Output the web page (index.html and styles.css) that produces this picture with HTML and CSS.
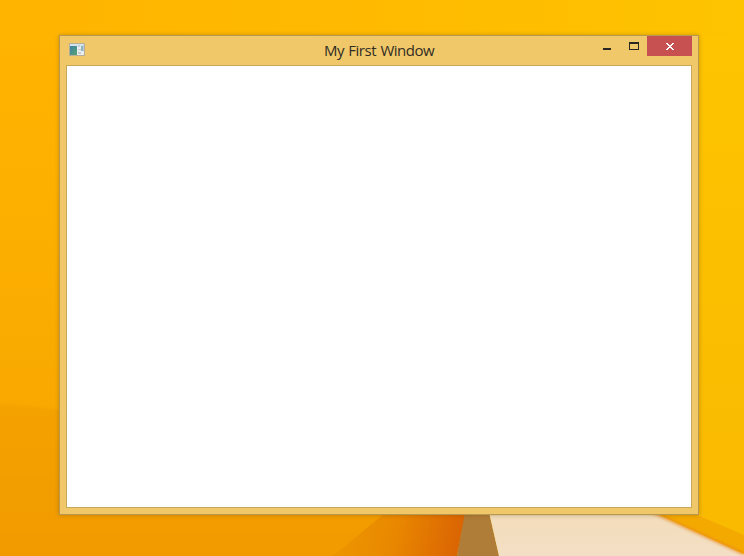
FILE: index.html
```html
<!DOCTYPE html>
<html lang="en">
<head>
<meta charset="utf-8">
<title>My First Window</title>
<link rel="stylesheet" href="styles.css">
</head>
<body>
<svg class="wallpaper" viewBox="0 0 744 556" aria-hidden="true">
  <defs>
    <linearGradient id="base" x1="0" y1="0" x2="1" y2="0"><stop offset="0" stop-color="#ffb400"/><stop offset=".5" stop-color="#ffba00"/><stop offset="1" stop-color="#fec400"/></linearGradient>
    <linearGradient id="left" x1="0" y1="0" x2="0" y2="1"><stop offset="0" stop-color="#ffb400"/><stop offset=".5" stop-color="#fdaf00"/><stop offset="1" stop-color="#f8a800"/></linearGradient>
    <linearGradient id="low" x1="0" y1="0" x2="0" y2="1"><stop offset="0" stop-color="#f4a200"/><stop offset="1" stop-color="#f19900"/></linearGradient>
    <linearGradient id="ember" gradientUnits="userSpaceOnUse" x1="350" y1="520" x2="462" y2="545"><stop offset="0" stop-color="#ec9300"/><stop offset=".4" stop-color="#e98800"/><stop offset=".8" stop-color="#df6f02"/><stop offset="1" stop-color="#d96303"/></linearGradient>
    <linearGradient id="right" x1="0" y1="0" x2="0" y2="1"><stop offset="0" stop-color="#fec400"/><stop offset="1" stop-color="#f9b900"/></linearGradient>
    <linearGradient id="cream" x1="0" y1="0" x2="0" y2="1"><stop offset="0" stop-color="#f2dcb9"/><stop offset="1" stop-color="#f3dfc5"/></linearGradient>
    <filter id="soft" x="-10%" y="-30%" width="120%" height="160%"><feGaussianBlur stdDeviation="1.5"/></filter>
  </defs>
  <rect width="744" height="556" fill="url(#base)"/>
  <path d="M0 36H100V420H0Z" fill="url(#left)"/>
  <path d="M-20 402L100 413L400 500V576H-20Z" fill="url(#low)" filter="url(#soft)"/>
  <path d="M386 512L333 556H457L466 512Z" fill="url(#ember)"/>
  <rect x="650" y="36" width="94" height="520" fill="url(#right)"/>
  <path d="M465 512L457 556H499L489 512Z" fill="#af7d38"/>
  <path d="M489 512H653L744 554V556H499Z" fill="url(#cream)"/>
  <path d="M653 512L690 512L744 535V554Z" fill="#f4a900"/>
  <path d="M650 511L744 554" fill="none" stroke="#e98a16" stroke-width="2" filter="url(#soft)"/>
</svg>
<main class="window">
  <header class="titlebar">
    <svg class="app-icon" viewBox="0 0 16 13" aria-hidden="true">
      <defs><linearGradient id="pane" x1="0" y1="0" x2="1" y2="1"><stop offset="0" stop-color="#3f83a8"/><stop offset="1" stop-color="#55a36d"/></linearGradient></defs>
      <path d="M0 0H16V13H0Z" fill="#b5ae98"/>
      <path d="M1 1H15V12H1Z" fill="#e9edf0"/>
      <path d="M1 1H15V3H1Z" fill="#d5e3ec"/>
      <path d="M1 3H8V12H1Z" fill="url(#pane)"/>
      <path d="M9 2H11V4H9ZM9 6H12V7H9ZM9 9H12V11H9Z" fill="#c6cbcf"/>
      <path d="M12 3H14V8H12Z" fill="#8db8b9"/>
      <path d="M14 2H15V8H14Z" fill="#bdc5dc"/>
    </svg>
    <h1 class="title">My First Window</h1>
    <div class="controls">
      <button class="control" aria-label="Minimize"><svg viewBox="0 0 27 20"><path d="M10 12H18V14H10Z"/></svg></button>
      <button class="control" aria-label="Maximize"><svg viewBox="0 0 27 20"><path fill-rule="evenodd" d="M9 6H19V14H9ZM10 8V13H18V8Z"/></svg></button>
      <button class="control close" aria-label="Close"><svg viewBox="0 0 45 20"><path d="M19 7h2v1h1v1h2v-1h1v-1h2v1h-1v1h-1v1h-1v1h1v1h1v1h1v1h-2v-1h-1v-1h-2v1h-1v1h-2v-1h1v-1h1v-1h1v-1h-1v-1h-1v-1h-1z"/></svg></button>
    </div>
  </header>
  <section class="client"></section>
</main>
</body>
</html>
```
FILE: styles.css
```css
* { box-sizing: border-box; }

body {
  margin: 0;
  width: 744px;
  height: 556px;
  padding: 35px 45px 41px 59px;
  overflow: hidden;
  background: #ffb900;
  font-family: "Open Sans", "Noto Sans", sans-serif;
}

.wallpaper {
  position: absolute;
  inset: 0;
  width: 744px;
  height: 556px;
}

.window {
  position: relative;
  display: flex;
  flex-direction: column;
  width: 640px;
  height: 480px;
  padding: 0 6px 6px;
  border: 1px solid #b8984e;
  background: #f0c869;
  box-shadow: 0 0 4px rgba(90, 60, 0, .35);
}

.titlebar {
  display: grid;
  grid-template-columns: 99px 1fr 99px;
  height: 29px;
  flex: none;
}

.app-icon {
  width: 16px;
  height: 13px;
  margin: 7px 0 0 3px;
}

.title {
  margin: 0;
  color: #302d25;
  font-size: 15px;
  font-weight: 400;
  letter-spacing: -0.5px;
  word-spacing: 1px;
  line-height: 29px;
  text-align: center;
  white-space: nowrap;
}

.controls {
  display: flex;
  height: 20px;
}

.control {
  width: 27px;
  height: 20px;
  padding: 0;
  border: 0;
  background: transparent;
}

.control svg {
  display: block;
  width: 100%;
  height: 20px;
  fill: #2a2722;
  shape-rendering: crispEdges;
}

.close {
  width: 45px;
  background: #c75050;
}

.close svg { fill: #fff; }

.client {
  flex: 1;
  border: 1px solid #c9a759;
  background: #fff;
}
```
